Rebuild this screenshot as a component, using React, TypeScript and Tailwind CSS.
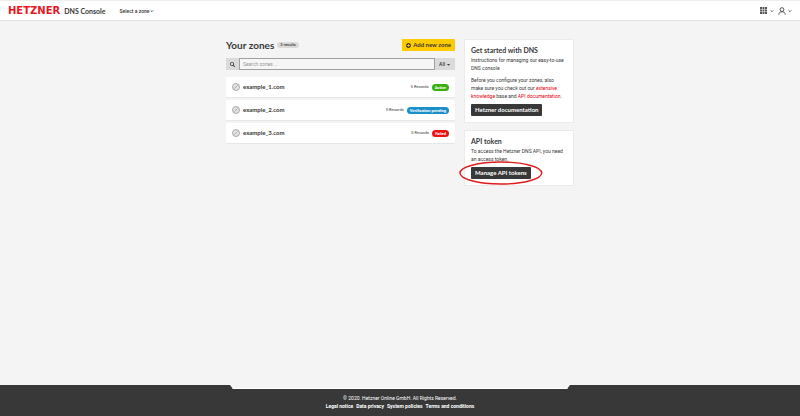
import { useState } from 'react'
import { FaCaretDown, FaPlusCircle, FaSearch } from 'react-icons/fa'

// ── Data ─────────────────────────────────────────────────────────────────────

interface Zone {
  name: string
  records: number
  status: string
  color: string
}

const ZONES: Zone[] = [
  { name: 'example_1.com', records: 5, status: 'Active', color: 'bg-[#38b00f]' },
  { name: 'example_2.com', records: 0, status: 'Verification pending', color: 'bg-[#1c8fc9]' },
  { name: 'example_3.com', records: 0, status: 'Failed', color: 'bg-[#ee1111]' },
]

const FOOTER_LINKS = ['Legal notice', 'Data privacy', 'System policies', 'Terms and conditions']

// ── Page ─────────────────────────────────────────────────────────────────────

export default function App() {
  const [query, setQuery] = useState('')
  const zones = ZONES.filter(z => z.name.includes(query))

  return (
    <div className="flex min-h-screen flex-col bg-[#f4f4f4] font-['Roboto',sans-serif] text-[5px] leading-[8px] text-[#383838]">
      <Header />

      <main className="mx-auto flex w-full max-w-[348px] flex-1 items-start gap-[9px] pt-[18px]">
        <section className="min-w-0 flex-1">
          <div className="flex h-3 items-center">
            <h1 className="font-['Lato',sans-serif] text-[10px] font-bold">Your zones</h1>
            <span className="ml-[3px] rounded-full bg-[#dadada] px-[3px] text-[4px] leading-[6px] font-medium">
              {zones.length} results
            </span>
            <button className="ml-auto flex h-3 items-center gap-[2px] rounded-[1px] bg-[#fecb00] px-1 font-['Lato',sans-serif] text-[6px] font-bold">
              <FaPlusCircle size={5} />
              Add new zone
            </button>
          </div>

          <div className="mt-[7px] flex h-3 bg-[#dadada]">
            <label htmlFor="search" className="flex w-[13px] items-center justify-center">
              <FaSearch size={5} aria-label="Search" />
            </label>
            <input
              id="search"
              value={query}
              onChange={e => setQuery(e.target.value)}
              placeholder="Search zones ..."
              className="min-w-0 flex-1 border border-[#a0a0a0] bg-[#f6f6f6] px-[3px] placeholder:text-[#999]"
            />
            <button className="flex w-5 items-center justify-center gap-px font-medium">
              All
              <FaCaretDown size={5} />
            </button>
          </div>

          <ul className="mt-[7px] space-y-[3px]">
            {zones.map(zone => (
              <ZoneRow key={zone.name} zone={zone} />
            ))}
          </ul>
        </section>

        <aside className="w-[110px] space-y-[7px]">
          <Card title="Get started with DNS" action="Hetzner documentation">
            <p>Instructions for managing our easy-to-use DNS console</p>
            <p className="mt-1">
              Before you configure your zones, also make sure you check out our{' '}
              <a href="#knowledge" className="text-[#e3000f]">extensive knowledge</a> base and{' '}
              <a href="#api" className="text-[#e3000f]">API documentation</a>.
            </p>
          </Card>
          <Card title="API token" action="Manage API tokens" highlighted>
            <p>To access the Hetzner DNS API, you need an access token.</p>
          </Card>
        </aside>
      </main>

      <Footer />
    </div>
  )
}

// ── Header ───────────────────────────────────────────────────────────────────

function Header() {
  return (
    <header className="flex h-[21px] items-center border-t border-b border-t-[#eee] border-b-[#e2e2e2] bg-white px-2">
      <a href="#home" className="flex items-center gap-1">
        <span className="font-['DejaVu_Sans',sans-serif] text-[10px] font-bold text-[#e8171f]">HETZNER</span>
        <span className="font-['Lato',sans-serif] text-[7px] font-bold">DNS Console</span>
      </a>
      <button className="ml-[14px] flex items-center gap-px font-medium">
        Select a zone
        <Chevron />
      </button>
      <div className="ml-auto flex items-center gap-1">
        <button className="flex items-center gap-[3px]" aria-label="Products">
          <svg width="7" height="7" viewBox="0 0 7 7" fill="#555">
            {[0, 2.5, 5].map(y => [0, 2.5, 5].map(x => <rect key={`${x}-${y}`} x={x} y={y} width="2" height="2" />))}
          </svg>
          <Chevron />
        </button>
        <button className="flex items-center gap-[2px]" aria-label="Account">
          <svg width="8" height="8" viewBox="0 0 8 8" fill="none" stroke="#444" strokeWidth="0.9">
            <circle cx="4" cy="2.6" r="1.9" />
            <path d="M0.8 7.6C0.8 5.6 2 4.8 4 4.8S7.2 5.6 7.2 7.6" />
          </svg>
          <Chevron />
        </button>
      </div>
    </header>
  )
}

function Chevron() {
  return (
    <svg width="4" height="4" viewBox="0 0 4 4" fill="none" stroke="#444" strokeWidth="0.8">
      <path d="M0.6 1.3L2 2.7L3.4 1.3" />
    </svg>
  )
}

// ── Zones ────────────────────────────────────────────────────────────────────

function ZoneRow({ zone }: { zone: Zone }) {
  return (
    <li className="flex h-5 items-center rounded-[1px] bg-white px-[6px] shadow-[0_1px_1px_#e6e6e6]">
      <svg width="8" height="8" viewBox="0 0 8 8" fill="#e4e4e4" stroke="#8c8c8c" strokeWidth="0.7">
        <circle cx="4" cy="4" r="3.5" />
        <path d="M2.4 5.6L5.6 2.4" />
      </svg>
      <a href={`#${zone.name}`} className="ml-[3px] font-['Lato',sans-serif] text-[6px] font-bold">
        {zone.name}
      </a>
      <span className="ml-auto text-[4px]">{zone.records} Records</span>
      <span className={`${zone.color} ml-[3px] rounded-full px-[3px] text-[4px] leading-[7px] font-bold text-white`}>
        {zone.status}
      </span>
    </li>
  )
}

// ── Cards ────────────────────────────────────────────────────────────────────

function Card({ title, action, highlighted, children }: {
  title: string
  action: string
  highlighted?: boolean
  children: React.ReactNode
}) {
  return (
    <div className="border border-[#ebebeb] bg-white p-[6px]">
      <h2 className="mb-[2px] font-['Lato',sans-serif] text-[7px] font-bold">{title}</h2>
      {children}
      <div className="relative mt-1 w-fit">
        <button className="block h-3 rounded-[1px] bg-[#383838] px-1 font-['Lato',sans-serif] text-[6px] font-bold text-white">
          {action}
        </button>
        {highlighted && (
          <svg
            className="pointer-events-none absolute -inset-x-3 -inset-y-[6px] h-6 w-[calc(100%+24px)]"
            viewBox="0 0 83 24"
            preserveAspectRatio="none"
            fill="none"
            stroke="#e01b1b"
            strokeWidth="1.4"
          >
            <ellipse cx="41.5" cy="12" rx="40.5" ry="11" />
          </svg>
        )}
      </div>
    </div>
  )
}

// ── Footer ───────────────────────────────────────────────────────────────────

function Footer() {
  return (
    <footer className="bg-[#383838] pb-[6px] text-center text-white">
      <div className="mx-auto h-1 max-w-[340px] border-b border-white bg-[#f4f4f4] [clip-path:polygon(0_0,100%_0,calc(100%-3px)_100%,3px_100%)]" />
      <p className="mt-[5px]">© 2020. Hetzner Online GmbH. All Rights Reserved.</p>
      <nav className="flex justify-center gap-[3px] font-bold">
        {FOOTER_LINKS.map(link => (
          <a key={link} href="#footer">{link}</a>
        ))}
      </nav>
    </footer>
  )
}
